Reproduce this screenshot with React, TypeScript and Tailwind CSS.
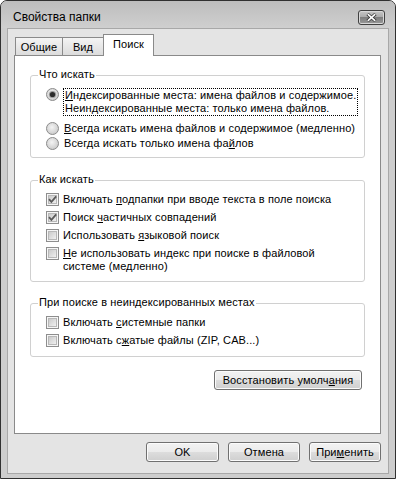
import { type ReactNode } from "react";

const font = { fontFamily: '"Liberation Sans", Arial, sans-serif' };

function Radio({ checked }: { checked?: boolean }): ReactNode {
  return (
    <svg width="13" height="13" viewBox="0 0 13 13" className="shrink-0">
      <defs>
        <radialGradient id="rg" cx="0.45" cy="0.4" r="0.7">
          <stop offset="0" stopColor="#f4f4f4" />
          <stop offset="1" stopColor="#c4c4c4" />
        </radialGradient>
      </defs>
      <circle cx="6.5" cy="6.5" r="6" fill="url(#rg)" stroke="#8c8c8c" />
      {checked && (
        <>
          <circle cx="6.5" cy="6.5" r="3.6" fill="#9a9a9a" />
          <circle cx="6.5" cy="6.5" r="2.6" fill="#2c2c2c" />
        </>
      )}
    </svg>
  );
}

function Check({ checked }: { checked?: boolean }): ReactNode {
  return (
    <svg width="13" height="13" viewBox="0 0 13 13" className="shrink-0">
      <defs>
        <linearGradient id="cg" x1="0" y1="0" x2="1" y2="1">
          <stop offset="0" stopColor="#c8c8c8" />
          <stop offset="1" stopColor="#f2f2f2" />
        </linearGradient>
      </defs>
      <rect x="0.5" y="0.5" width="12" height="12" fill="#f6f6f6" stroke="#8e8e8e" />
      <rect x="2.5" y="2.5" width="8" height="8" fill="url(#cg)" stroke="#b8b8b8" />
      {checked && (
        <path
          d="M3 6.2 L5.4 8.8 L10.2 3.4"
          fill="none"
          stroke="#5a5a5a"
          strokeWidth="1.8"
        />
      )}
    </svg>
  );
}

function Group({ label, children, className = "" }: { label: string; children: ReactNode; className?: string }): ReactNode {
  return (
    <div className={`relative border border-[#d0d0d0] rounded-[3px] whitespace-nowrap ${className}`}>
      <span className="absolute -top-[8px] left-[7px] bg-white px-[1px] leading-[13px]">{label}</span>
      {children}
    </div>
  );
}

function Btn({ children, className = "" }: { children: ReactNode; className?: string }): ReactNode {
  return (
    <button
      type="button"
      className={`h-[20px] rounded-[3px] border border-[#707070] bg-[linear-gradient(#f2f2f2_0%,#ebebeb_50%,#dddddd_50%,#cfcfcf_100%)] shadow-[inset_0_0_0_1px_#fbfbfb] text-[11px] leading-[13px] tracking-[0.1px] text-black whitespace-nowrap ${className}`}
    >
      {children}
    </button>
  );
}

export default function App(): ReactNode {
  return (
    <div
      style={font}
      className="w-[396px] h-[479px] flex flex-col border border-[#303030] rounded-t-[7px] bg-[#cdcdcd] text-[11px] text-black overflow-hidden"
    >
      <div className="h-[27px] shrink-0 flex items-center justify-between pl-[12px] pr-[10px] pt-[5px] bg-[linear-gradient(#bdbdbd,#cfcfcf)]">
        <span className="text-[12px] leading-[14px]">Свойства папки</span>
        <div className="w-[27px] h-[15px] rounded-[3px] border border-[#404040] bg-[linear-gradient(#c6c6c6_0%,#a9a9a9_50%,#7e7e7e_50%,#9a9a9a_100%)] shadow-[inset_0_0_0_1px_#d8d8d8] flex items-center justify-center">
          <svg width="11" height="9" viewBox="0 0 11 9">
            <path d="M1.5 1 L9.5 8 M9.5 1 L1.5 8" stroke="#3a3a3a" strokeWidth="3.2" />
            <path d="M1.8 1.2 L9.2 7.8 M9.2 1.2 L1.8 7.8" stroke="#ffffff" strokeWidth="1.6" />
          </svg>
        </div>
      </div>

      <div className="flex-1 mx-[6px] mb-[4px] border border-[#a8a8a8] bg-[#e4e4e4] flex flex-col pt-[5px] pl-[6px] pr-[7px] pb-[10px] tracking-[0.1px]">
        <div className="flex items-end pl-[1px] h-[21px]">
          <div className="w-[48px] h-[18px] border border-b-0 border-[#8a8a8a] bg-[linear-gradient(#f4f4f4,#dcdcdc)] flex items-center justify-center leading-[13px] pt-[1px]">
            Общие
          </div>
          <div className="-ml-px w-[42px] h-[18px] border border-b-0 border-[#8a8a8a] bg-[linear-gradient(#f4f4f4,#dcdcdc)] flex items-center justify-center leading-[13px] pt-[1px]">
            Вид
          </div>
          <div className="-ml-px w-[51px] h-[22px] -mb-px relative z-10 border border-b-0 border-[#8a8a8a] bg-white flex items-start justify-center leading-[13px] pt-[3px]">
            Поиск
          </div>
        </div>

        <div className="h-[379px] border border-[#8a8a8a] bg-white pt-[19px] px-[15px] flex flex-col">
          <Group label="Что искать" className="pt-[12px] pl-[15px] pr-[2px] pb-[6px]">
            <div className="flex items-start gap-[4px] h-[28px]">
              <Radio checked />
              <div className="border border-dotted border-black px-[1px] leading-[13px]">
                <div>
                  <u>И</u>ндексированные места: имена файлов и содержимое.
                </div>
                <div>Неиндексированные места: только имена файлов.</div>
              </div>
            </div>
            <div className="flex items-center gap-[5px] h-[15px] mt-[5px] leading-[13px]">
              <Radio />
              <span>
                <u>В</u>сегда искать имена файлов и содержимое (медленно)
              </span>
            </div>
            <div className="flex items-center gap-[5px] h-[15px] leading-[13px]">
              <Radio />
              <span>
                Всегда искать только имена фа<u>й</u>лов
              </span>
            </div>
          </Group>

          <Group label="Как искать" className="mt-[22px] pt-[12px] pl-[15px] pr-[2px] pb-[8px] flex flex-col gap-[5px] leading-[13px]">
            <div className="flex items-center gap-[4px]">
              <Check checked />
              <span>
                Включать <u>п</u>одпапки при вводе текста в поле поиска
              </span>
            </div>
            <div className="flex items-center gap-[4px]">
              <Check checked />
              <span>
                Поиск <u>ч</u>астичных совпадений
              </span>
            </div>
            <div className="flex items-center gap-[4px]">
              <Check />
              <span>
                Использовать <u>я</u>зыковой поиск
              </span>
            </div>
            <div className="flex items-start gap-[4px]">
              <Check />
              <span>
                <u>Н</u>е использовать индекс при поиске в файловой
                <br />
                системе (медленно)
              </span>
            </div>
          </Group>

          <Group
            label="При поиске в неиндексированных местах"
            className="mt-[21px] pt-[12px] pl-[15px] pr-[2px] pb-[9px] flex flex-col gap-[5px] leading-[13px]"
          >
            <div className="flex items-center gap-[4px]">
              <Check />
              <span>
                Включать <u>с</u>истемные папки
              </span>
            </div>
            <div className="flex items-center gap-[4px]">
              <Check />
              <span>
                Включать с<u>ж</u>атые файлы (ZIP, CAB...)
              </span>
            </div>
          </Group>

          <div className="flex justify-end mt-[13px] mr-[3px]">
            <Btn className="w-[148px]">
              Восстановить умолч<u>а</u>ния
            </Btn>
          </div>
        </div>

        <div className="flex justify-end gap-[9px] mt-[8px]">
          <Btn className="w-[73px]">OK</Btn>
          <Btn className="w-[72px]">Отмена</Btn>
          <Btn className="w-[72px]">
            При<u>м</u>енить
          </Btn>
        </div>
      </div>
    </div>
  );
}
